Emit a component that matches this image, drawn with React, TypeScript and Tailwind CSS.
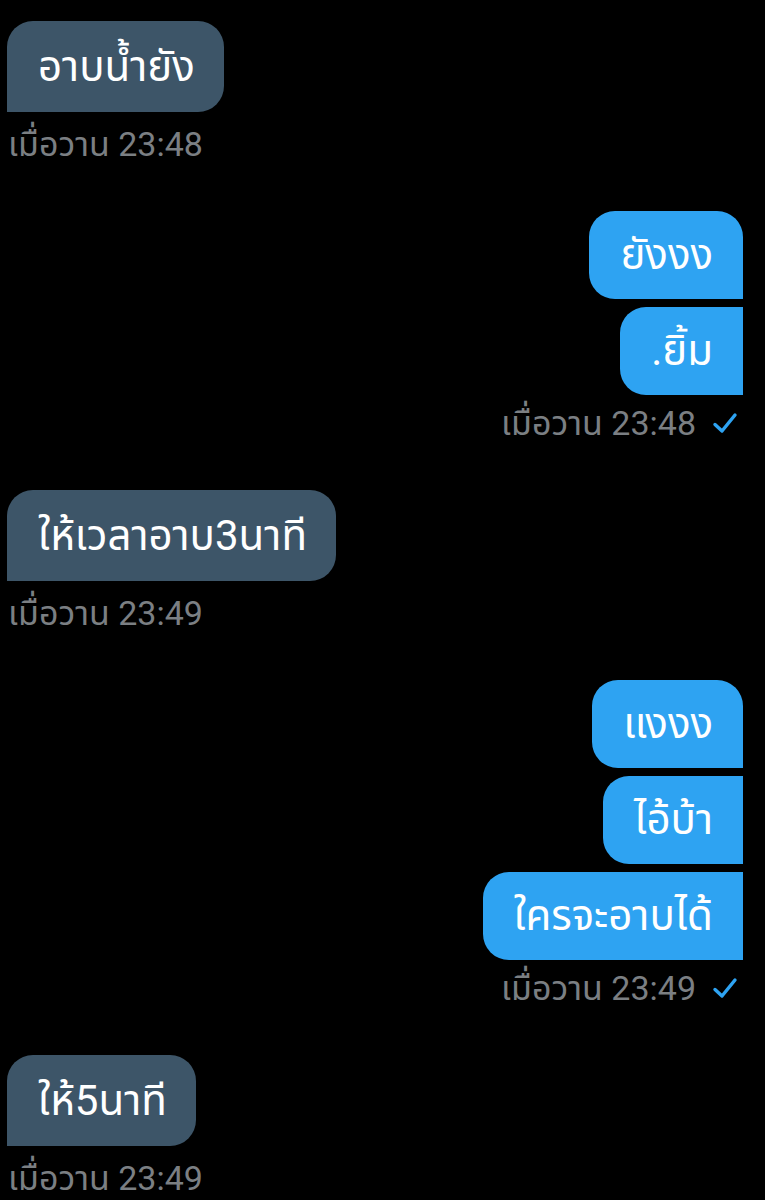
import React from "react";

const FONT = { fontFamily: 'Roboto, "Noto Sans", "Noto Sans Thai", sans-serif' };

function Check() {
  return (
    <svg width="26" height="24" viewBox="0 0 26 24" fill="none">
      <path d="M3 13.5 L10 20 L23 4" stroke="#2ea3f2" strokeWidth="3.4" strokeLinecap="round" strokeLinejoin="round" />
    </svg>
  );
}

function LeftGroup({ text, time }: { text: string; time: string }) {
  return (
    <div className="flex flex-col items-start">
      <div className="h-[91px] flex items-center pl-[31px] pr-[29px] bg-[#3d5568] text-white text-[42px] leading-none rounded-tl-[26px] rounded-tr-[26px] rounded-br-[26px]">
        {text}
      </div>
      <div className="mt-[10px] h-[44px] flex items-center pl-[1px] text-[34px] leading-none text-[#7b7f83]">{time}</div>
    </div>
  );
}

function RightGroup({ texts, time }: { texts: string[]; time: string }) {
  return (
    <div className="flex flex-col items-end gap-[8px]">
      {texts.map((t, i) => (
        <div
          key={i}
          className={
            "h-[88px] flex items-center pl-[31px] pr-[30px] bg-[#2ea3f2] text-white text-[42px] leading-none rounded-tl-[26px] rounded-bl-[26px] " +
            (i === 0 ? "rounded-tr-[26px]" : "")
          }
        >
          {t}
        </div>
      ))}
      <div className="-mt-[2px] h-[44px] flex items-center gap-[16px] pr-[5px] text-[34px] leading-none text-[#7b7f83]">
        <span>{time}</span>
        <Check />
      </div>
    </div>
  );
}

export default function App() {
  return (
    <div className="bg-black w-[765px] h-[1200px] overflow-hidden pt-[21px] pl-[7px] pr-[22px] flex flex-col gap-[45px]" style={FONT}>
      <LeftGroup text="อาบน้ำยัง" time="เมื่อวาน 23:48" />
      <RightGroup texts={["ยังงง", ".ยิ้ม"]} time="เมื่อวาน 23:48" />
      <LeftGroup text="ให้เวลาอาบ3นาที" time="เมื่อวาน 23:49" />
      <RightGroup texts={["แงงง", "ไอ้บ้า", "ใครจะอาบได้"]} time="เมื่อวาน 23:49" />
      <LeftGroup text="ให้5นาที" time="เมื่อวาน 23:49" />
    </div>
  );
}
